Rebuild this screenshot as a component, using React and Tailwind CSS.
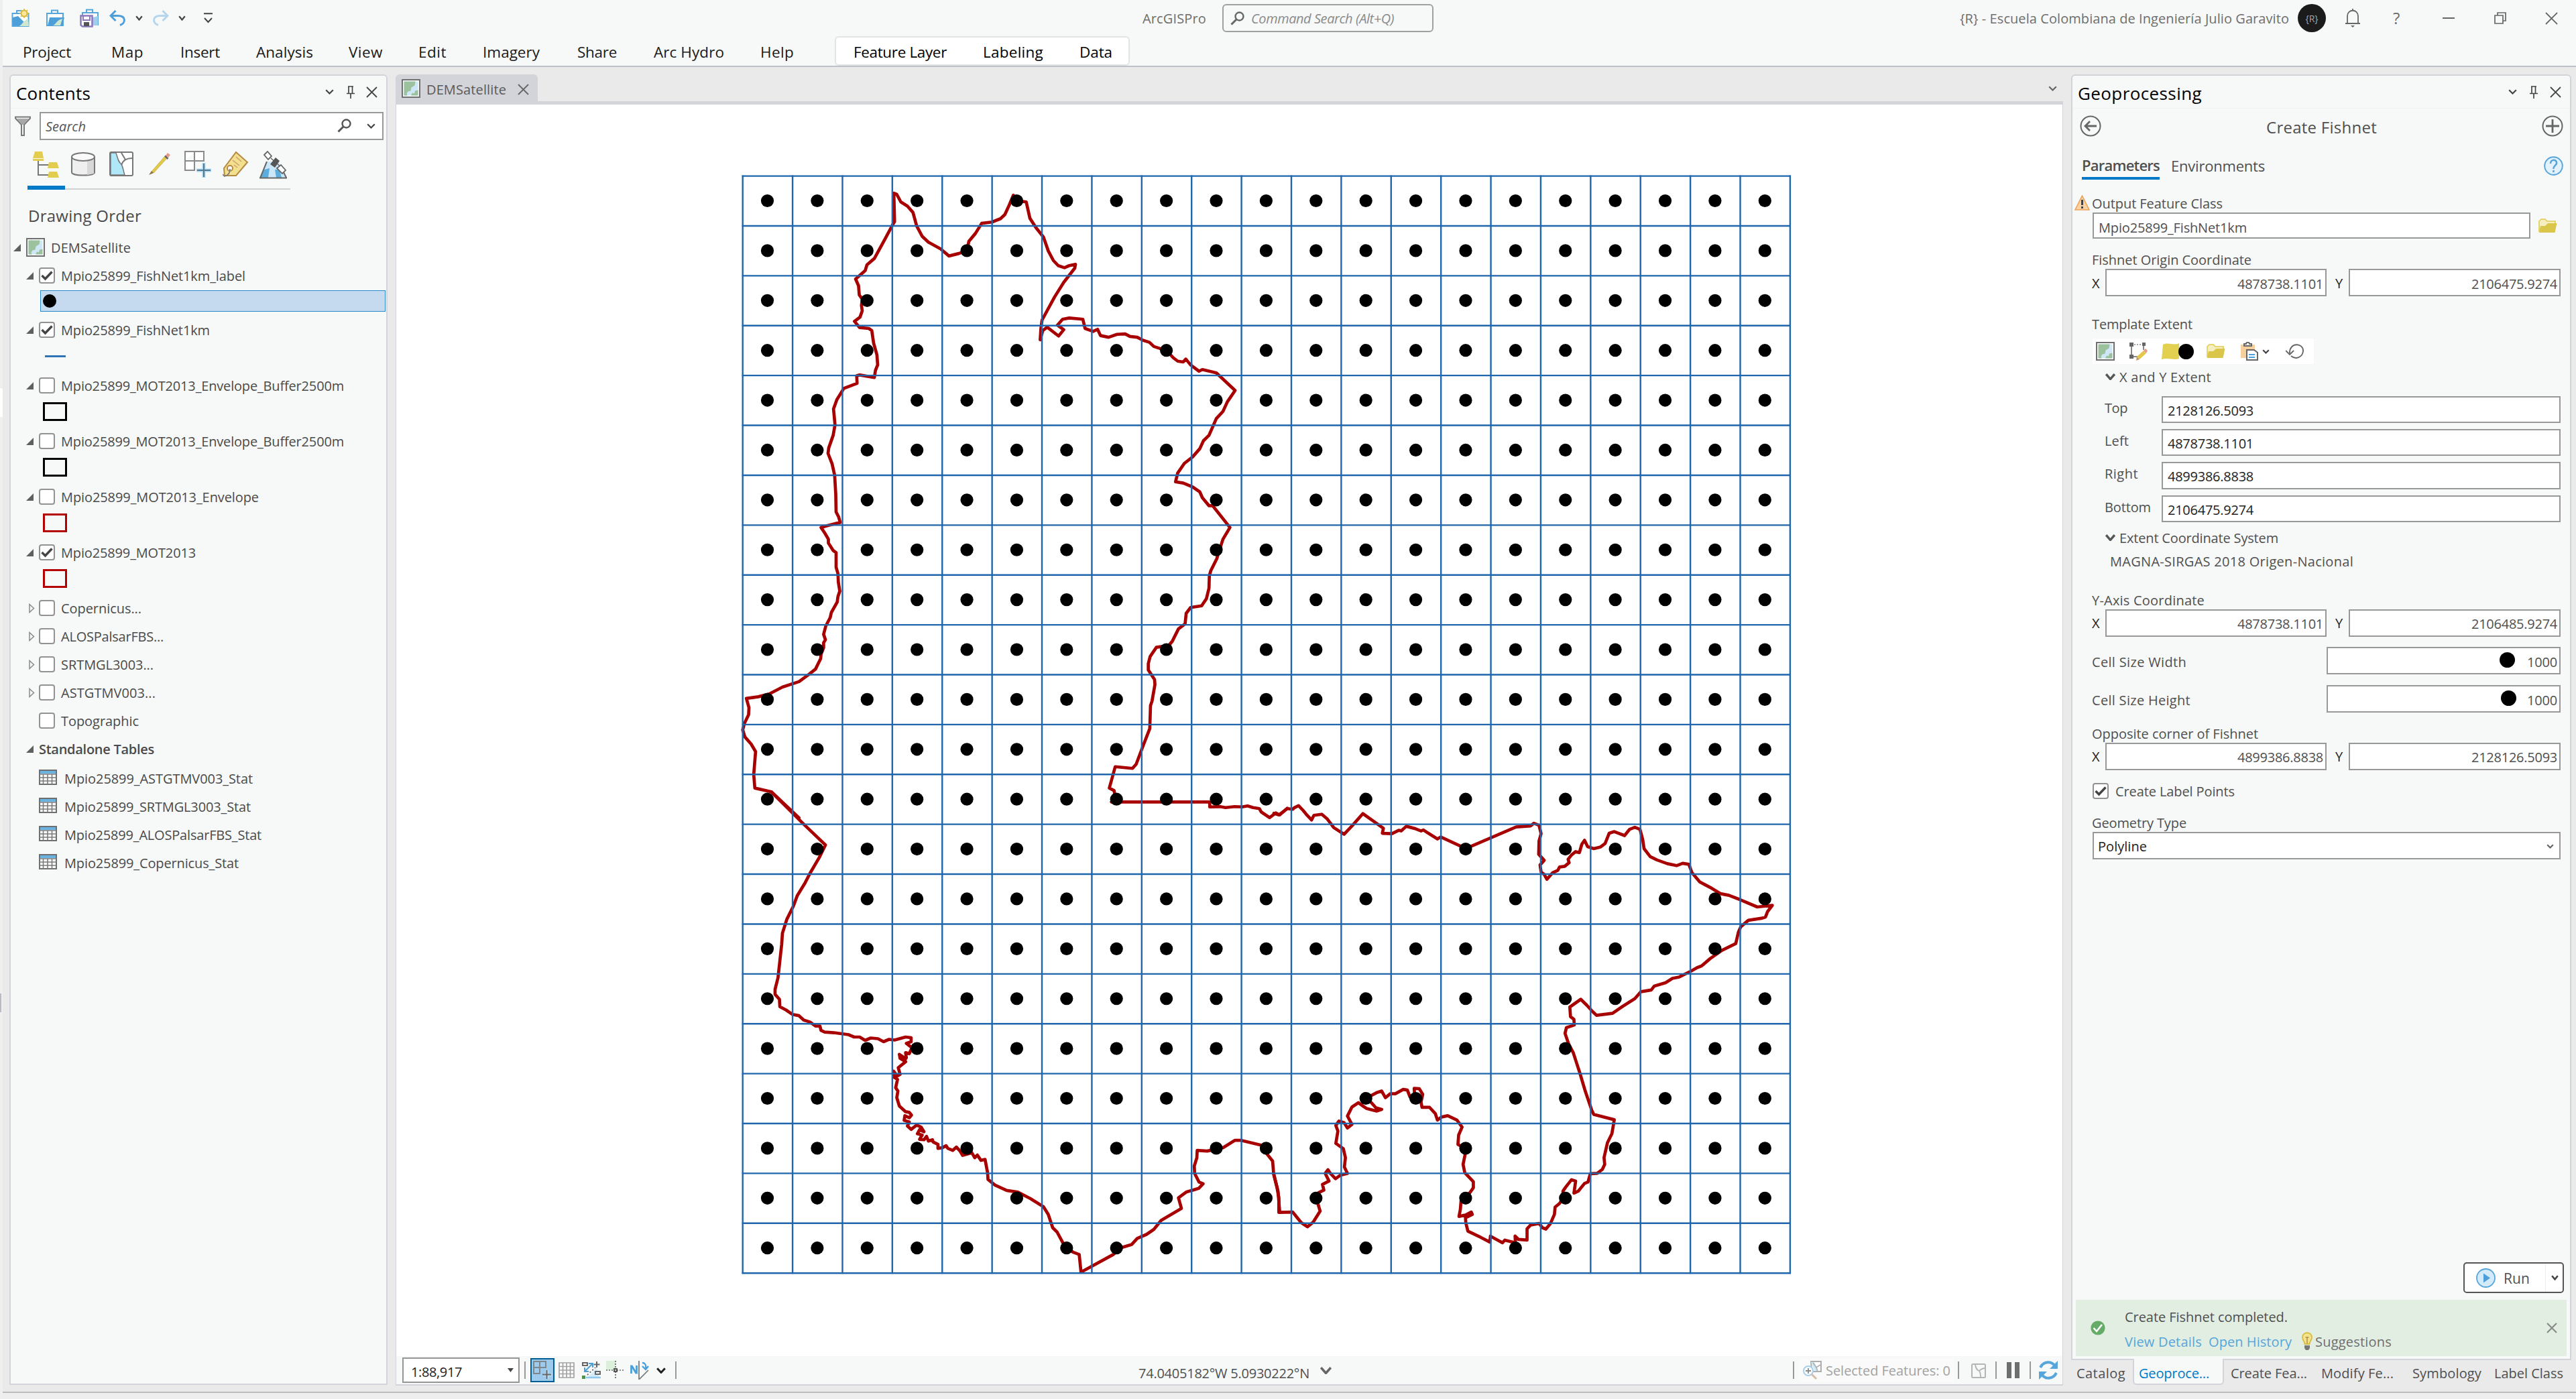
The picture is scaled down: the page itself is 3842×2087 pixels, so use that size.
import { useLayoutEffect, useRef } from "react";

/* Text set to a measured column width by adjusting its letter spacing. */
function T({ w, className = "", children }) {
  const ref = useRef(null);
  useLayoutEffect(() => {
    const el = ref.current;
    el.style.letterSpacing = "0px";
    const natural = el.getBoundingClientRect().width;
    el.style.letterSpacing = (w + 2 - natural) / String(children).length + "px";
  }, [w, children]);
  return (
    <span className={"block shrink-0 -translate-x-px translate-y-px whitespace-pre " + className} style={{ width: w }}>
      <span ref={ref} className="inline-block">{children}</span>
    </span>
  );
}

const Svg = ({ w, h, className = "", children }) => (
  <svg width={w} height={h} viewBox={`0 0 ${w} ${h}`} fill="none" className={"block shrink-0 " + className}>{children}</svg>
);

const Chevron = ({ w = 13, h = 8, color = "#444", sw = 2.2, className = "" }) => (
  <Svg w={w} h={h} className={className}>
    <path d={`M1.2 1.2 L${w / 2} ${h - 1.5} L${w - 1.2} 1.2`} stroke={color} strokeWidth={sw} />
  </Svg>
);
const Cross = ({ s = 18, color = "#444", sw = 1.8, className = "" }) => (
  <Svg w={s} h={s} className={className}>
    <path d={`M1 1 L${s - 1} ${s - 1} M${s - 1} 1 L1 ${s - 1}`} stroke={color} strokeWidth={sw} />
  </Svg>
);
const Pin = ({ className = "" }) => (
  <Svg w={12} h={19} className={className}>
    <path d="M2 1h8M3 1v10M8.500 1v10M0 11.500h12M6 12v7" stroke="#444" strokeWidth="1.700" />
  </Svg>
);
const Magnifier = ({ color = "#555", className = "" }) => (
  <Svg w={21} h={21} className={className}>
    <circle cx="13.5" cy="7.5" r="6" stroke={color} strokeWidth="2.4" />
    <path d="M9 12 L1.5 19.5" stroke={color} strokeWidth="3" />
  </Svg>
);
const MapIcon = ({ className = "" }) => (
  <Svg w={28} h={28} className={className}>
    <rect x="1" y="1" width="26" height="26" fill="#fff" stroke="#707070" strokeWidth="2" />
    <rect x="3.5" y="3.5" width="21" height="21" fill="#cfe6f6" />
    <path d="M3.500 3.500h17l-1 6-5 3-1 5-4 1-2 3 1 3h-5z" fill="#9bc29c" />
    <path d="M14 24.500l2-4 3 1 1-4 4.500-1v8z" fill="#9bc29c" />
  </Svg>
);
const Folder = ({ className = "" }) => (
  <Svg w={28} h={22} className={className}>
    <path d="M1 20V4l3-3h6l3 3h12v5" stroke="#e0cc50" strokeWidth="1.6" fill="#f5eec0" />
    <path d="M1 21l2-10h7l4-4h13.500l-3 14z" fill="#dac64a" />
  </Svg>
);
const Undo = ({ color, flip }) => (
  <Svg w={26} h={24}>
    <g transform={flip ? "matrix(-1 0 0 1 26 0)" : undefined}>
      <path d="M2 8.500h11c12 0 12 11 3 14" stroke={color} strokeWidth="3" />
      <path d="M9.500 1L2 8.500l7.500 7.500" stroke={color} strokeWidth="3" />
    </g>
  </Svg>
);

function TitleBar() {
  return (
    <div className="flex h-[54px] items-center pl-[13px] text-[20px] text-[#6e6e6e]">
      <Svg w={28} h={28}>
        <path d="M1.500 7h24v19h-24z" fill="#fff" stroke="#56a5db" strokeWidth="2" />
        <path d="M2 13l8-2 8 8 7 6H2z" fill="#4d9fd9" />
        <path d="M26 26H12c4-2 5-8 13-11z" fill="#cfe7cf" />
        <path d="M8 7V3h8" stroke="#56a5db" strokeWidth="2" />
        <circle cx="19" cy="7" r="4.500" fill="#fbe89a" stroke="#d8b93c" strokeWidth="2" />
        <path d="M19 0v2M19 12v2M12 7h2M24 7h2M14 2l1.500 1.500M22.500 10.500L24 12M24 2l-1.500 1.500M15.500 10.500L14 12" stroke="#d8b93c" strokeWidth="1.600" />
      </Svg>
      <Svg w={28} h={26} className="ml-[24px]">
        <path d="M1 6h24v18H1z" fill="#fff" stroke="#56a5db" strokeWidth="2" />
        <path d="M8 6V1.500h9V6" stroke="#56a5db" strokeWidth="2" />
        <path d="M2 25L5 12h22l-3 13z" fill="#4d9fd9" />
        <path d="M10 24c4-1 5-8 14-10l-3 10z" fill="#cfe7cf" />
      </Svg>
      <Svg w={29} h={28} className="ml-[22px]">
        <path d="M4 6h23v18H4z" fill="#fff" stroke="#56a5db" strokeWidth="2" />
        <path d="M10 6V1.500h9V6" stroke="#56a5db" strokeWidth="2" />
        <path d="M19 13l8-2v14h-8z" fill="#9fcdea" />
        <path d="M1.500 10.500h17v16H4l-2.500-2z" fill="#fff" stroke="#8d78bd" strokeWidth="2.600" />
        <path d="M5 11v6h10v-6" stroke="#8d78bd" strokeWidth="2" />
        <path d="M6 20h8v6H6z" fill="#555" />
      </Svg>
      <div className="ml-[15px]"><Undo color="#4d9fd9" /></div>
      <Chevron w={11} h={8} className="ml-[13px]" />
      <div className="ml-[13px]"><Undo color="#b5d5ec" flip /></div>
      <Chevron w={11} h={8} className="ml-[14px]" />
      <Svg w={13} h={16} className="ml-[27px]"><path d="M0 1.200h13M1 8l5.500 6L12 8" stroke="#444" strokeWidth="2" /></Svg>
      <T w={93} className="ml-[1388px]">ArcGISPro</T>
      <div className="ml-[25px] flex h-[42px] w-[315px] items-center rounded-[6px] border-2 border-[#a0a0a0] pl-[10px] text-[#8a8a8a]">
        <Magnifier color="#666" />
        <T w={211} className="ml-[11px] italic">Command Search (Alt+Q)</T>
      </div>
      <T w={489} className="ml-[786px]">{"{R} - Escuela Colombiana de Ingeniería Julio Garavito"}</T>
      <div className="ml-[14px] flex h-[42px] w-[42px] items-center justify-center rounded-full bg-[#1b1b1b] text-[14px] text-[#a5a5a5]">{"{R}"}</div>
      <Svg w={24} h={28} className="ml-[28px]">
        <path d="M1 22h22M4 21V11c0-11 16-11 16 0v10M12 3V0" stroke="#666" strokeWidth="1.800" />
        <path d="M9 25h6l-3 3z" fill="#666" />
      </Svg>
      <span className="ml-[48px] block w-[13px] text-[24px]">?</span>
      <div className="ml-[61px] h-[2px] w-[18px] bg-[#666]" />
      <Svg w={18} h={18} className="ml-[59px]">
        <path d="M1 5h12v12H1zM5 5V1h12v12h-4" stroke="#666" strokeWidth="1.700" />
      </Svg>
      <Cross s={19} color="#666" className="ml-[58px]" />
    </div>
  );
}

function Ribbon() {
  return (
    <div className="flex h-[44px] items-center pl-[31px] text-[22.5px] text-[#1a1a1a]">
      <T w={70} className="pt-[1px]">Project</T>
      <T w={46} className="ml-[62px] pt-[1px]">Map</T>
      <T w={57} className="ml-[57px] pt-[1px]">Insert</T>
      <T w={83} className="ml-[56px] pt-[1px]">Analysis</T>
      <T w={49} className="ml-[55px] pt-[1px]">View</T>
      <T w={40} className="ml-[55px] pt-[1px]">Edit</T>
      <T w={83} className="ml-[56px] pt-[1px]">Imagery</T>
      <T w={57} className="ml-[58px] pt-[1px]">Share</T>
      <T w={103} className="ml-[57px] pt-[1px]">Arc Hydro</T>
      <T w={48} className="ml-[56px] pt-[1px]">Help</T>
      <div className="ml-[62px] flex h-full w-[440px] items-center rounded-[6px] border-2 border-[#e2e3e5] bg-white pl-[27px] text-black">
        <T w={137} className="pt-[1px]">Feature Layer</T>
        <T w={88} className="ml-[56px] pt-[1px]">Labeling</T>
        <T w={47} className="ml-[56px] pt-[1px]">Data</T>
      </div>
    </div>
  );
}

const OpenArrow = () => <Svg w={11} h={11}><path d="M11 0v11H0z" fill="#5f5f5f" /></Svg>;
const ClosedArrow = () => <Svg w={11} h={15}><path d="M3 1.500l6.500 6L3 13.500z" stroke="#8a8a8a" strokeWidth="1.500" /></Svg>;

function Checkbox({ checked, className = "" }) {
  return (
    <div className={"flex h-[24px] w-[24px] shrink-0 items-center justify-center rounded-[4px] border-2 border-[#929292] bg-white " + className}>
      {checked && <Svg w={18} h={16}><path d="M1.500 8l5 5L16.500 2.500" stroke="#444" strokeWidth="3.400" /></Svg>}
    </div>
  );
}

function LayerRow({ name, w, checked, arrow, h = "h-[42px]" }) {
  return (
    <div className={"flex items-center pl-[23px] " + h}>
      <div className={arrow === "closed" ? "w-[11px] translate-x-[2px]" : "w-[11px]"}>{arrow === "open" ? <OpenArrow /> : arrow === "closed" ? <ClosedArrow /> : null}</div>
      <Checkbox checked={checked} className="ml-[8px]" />
      <T w={w} className="ml-[10px]">{name}</T>
    </div>
  );
}

const Swatch = ({ border }) => (
  <div className="flex h-[41px] pl-[48px]"><div className={"mt-[4px] h-[28px] w-[36px] border-[3px] " + border} /></div>
);

const TableIcon = () => (
  <Svg w={27} h={23}>
    <rect x="1" y="1" width="25" height="21" fill="#fff" stroke="#6f6f6f" strokeWidth="2" />
    <rect x="2" y="2" width="23" height="4" fill="#6ab2e0" />
    <path d="M1 7h25M1 12h25M1 17h25M6.500 7v15M13 7v15M19.500 7v15" stroke="#7b7b7b" strokeWidth="1.600" />
  </Svg>
);

const symbologyLayers = [
  ["Mpio25899_MOT2013_Envelope_Buffer2500m", 420, false, "border-black"],
  ["Mpio25899_MOT2013_Envelope_Buffer2500m", 420, false, "border-black"],
  ["Mpio25899_MOT2013_Envelope", 293, false, "border-[#b40000]"],
  ["Mpio25899_MOT2013", 199, true, "border-[#b40000]"],
];
const tables = [
  ["Mpio25899_ASTGTMV003_Stat", 279],
  ["Mpio25899_SRTMGL3003_Stat", 276],
  ["Mpio25899_ALOSPalsarFBS_Stat", 292],
  ["Mpio25899_Copernicus_Stat", 258],
];

function Contents() {
  return (
    <div className="ml-[10px] mt-[11px] h-[1955px] w-[564px] shrink-0 rounded-t-[6px] border-2 border-[#d3d4d9] bg-[#f7f9f8] text-[20px] text-[#4a4a4a]">
      <div className="flex h-[49px] items-center border-b border-[#f1f3f3] pl-[9px]">
        <T w={109} className="pt-[2px] text-[26px] text-black">Contents</T>
        <Chevron className="ml-[351px]" />
        <Pin className="ml-[19px]" />
        <Cross s={17} className="ml-[17px]" />
      </div>
      <div className="flex h-[51px] items-center pl-[6px]">
        <Svg w={24} h={30}>
          <path d="M1 1.500h22v2L14 13v16h-4V13L1 3.500z" fill="#f4f4f4" stroke="#7a7a7a" strokeWidth="2" />
          <path d="M3 4h18l-8 9h-2z" fill="#a8a8a8" />
        </Svg>
        <div className="ml-[13px] flex h-[42px] w-[513px] items-center border-2 border-[#999] bg-white pl-[8px]">
          <T w={58} className="pt-[1px] italic text-[#555]">Search</T>
          <Magnifier className="ml-[376px]" />
          <Chevron className="ml-[23px]" />
        </div>
      </div>
      <div className="ml-[25px] mt-[6px] flex h-[64px] w-[392px] items-start border-b-2 border-[#cfd1d0] pl-[8px] pt-[6px]">
        <Svg w={40} h={42}>
          <path d="M8 14v22h16M8 21h16" stroke="#777" strokeWidth="2" />
          <path d="M3 1h11l2 10H0zM0 12h16v3H0zM24 17h12l3 9H22zM24 31h12l3 9H22z" fill="#e3cd4e" />
        </Svg>
        <Svg w={37} h={36} className="ml-[17px] mt-[2px]">
          <path d="M1 7v23c0 6 34 6 34 0V7" fill="#efefef" stroke="#777" strokeWidth="2" />
          <path d="M24 10h10v22l-10 2z" fill="#d8d8d8" />
          <ellipse cx="18" cy="7" rx="17" ry="6" fill="#fafafa" stroke="#777" strokeWidth="2" />
        </Svg>
        <Svg w={36} h={37} className="ml-[20px] mt-[1px]">
          <rect x="1" y="1" width="34" height="35" rx="2" fill="#fff" stroke="#777" strokeWidth="2" />
          <path d="M2 2h8c3 9 3 13 8 17 3 5 3 11 5 16H2z" fill="#b0e8f8" stroke="#777" strokeWidth="1.500" />
          <path d="M34 10c-10 0-14 4-16 10M24 12L18 2" stroke="#777" strokeWidth="2" />
        </Svg>
        <Svg w={36} h={36} className="ml-[21px] mt-[2px]">
          <path d="M6 29L26 6l3 3L9 31z" fill="#e3c94a" stroke="#cdb545" strokeWidth="1" />
          <path d="M27 5l3-4 4 3-3 4z" fill="#e69c8d" />
          <path d="M26 5.500l4.500 4.500" stroke="#666" strokeWidth="2.500" />
          <path d="M6 28l-4 6 7-3z" fill="#8a7444" />
        </Svg>
        <Svg w={40} h={41} className="ml-[19px]">
          <path d="M1 1h28v14H1zM1 15v14h14V1" fill="#fff" stroke="#8a8a8a" strokeWidth="2" />
          <path d="M1 15h28M15 1v28" stroke="#8a8a8a" strokeWidth="2" />
          <path d="M29 18v22M18 29h22" stroke="#a9d6f3" strokeWidth="5" />
          <path d="M29 19v20M19 29h20" stroke="#56788f" strokeWidth="2" />
        </Svg>
        <Svg w={39} h={39} className="ml-[17px]">
          <path d="M20 2l17 15-17 20H3l-1-11z" fill="#f2e08e" stroke="#b58a43" strokeWidth="2" />
          <circle cx="11" cy="26" r="4" fill="#fff" stroke="#b58a43" strokeWidth="2" />
          <path d="M11 27c0 7-4 10-8 11l-3-3" stroke="#777" strokeWidth="1.600" />
          <path d="M20 9l8 7M15 14l10 8M17 21l5 4" stroke="#cf9f70" strokeWidth="1.600" />
        </Svg>
        <Svg w={43} h={42} className="ml-[15px]">
          <path d="M13 16h16l13 25H1z" fill="#cbe6f8" />
          <path d="M8 28l8-2-2 14H2zM24 28h7l3 12h-8z" fill="#5badde" />
          <path d="M12 16L2 40.500M1 40.500h41M41 40L35 28" stroke="#666" strokeWidth="2" />
          <path d="M18 11l16 14" stroke="#666" strokeWidth="1.500" />
          <path d="M8 6l5-5 6 7-5 5zM27 26l6-5 7 8-5 5z" fill="#fff" stroke="#666" strokeWidth="1.800" />
          <path d="M17 20l8-10 6 5-7 10z" fill="#555" />
        </Svg>
      </div>
      <div className="-mt-[6px] ml-[25px] h-[6px] w-[56px] bg-[#0079c8]" />
      <T w={167} className="ml-[27px] mt-[20px] text-[24px] leading-[36px]">Drawing Order</T>
      <div className="mt-[9px] flex h-[42px] items-center pl-[4px]">
        <OpenArrow />
        <MapIcon className="ml-[8px]" />
        <T w={117} className="ml-[10px]">DEMSatellite</T>
      </div>
      <LayerRow name="Mpio25899_FishNet1km_label" w={273} checked arrow="open" />
      <div className="ml-[44px] mt-[1px] flex h-[32px] w-[515px] items-center border-[1.500px] border-[#2a8bca] bg-[#c5daee] pl-[3px]">
        <div className="h-[20px] w-[20px] rounded-full bg-black" />
      </div>
      <LayerRow name="Mpio25899_FishNet1km" w={220} checked arrow="open" h="mt-[6px] h-[42px]" />
      <div className="flex h-[41px] pl-[51px]"><div className="mt-[17px] h-[3px] w-[31px] bg-[#2f74b5]" /></div>
      {symbologyLayers.map(([name, w, checked, border], i) => (
        <div key={i}>
          <LayerRow name={name} w={w} checked={checked} arrow="open" />
          <Swatch border={border} />
        </div>
      ))}
      <LayerRow name="Copernicus..." w={118} arrow="closed" />
      <LayerRow name="ALOSPalsarFBS..." w={151} arrow="closed" />
      <LayerRow name="SRTMGL3003..." w={136} arrow="closed" />
      <LayerRow name="ASTGTMV003..." w={139} arrow="closed" />
      <LayerRow name="Topographic" w={114} />
      <div className="flex h-[42px] items-center pl-[23px]">
        <OpenArrow />
        <T w={170} className="ml-[9px] font-semibold">Standalone Tables</T>
      </div>
      {tables.map(([name, w]) => (
        <div key={name} className="flex h-[42px] items-center pl-[42px]">
          <TableIcon />
          <T w={w} className="ml-[12px] pt-[4px]">{name}</T>
        </div>
      ))}
    </div>
  );
}

const boundary = [
  {
    t: "translate(1060 240) scale(0.54845 0.625)",
    p: "M240,1568 L165,1506 120,1497 117,1465 122,1410 110,1392 93,1375 87,1358 92,1342 103,1322 104,1305 97,1283 130,1279 160,1272 195,1256 240,1243 268,1225 285,1213 299,1188 300,1178 307,1162 307,1150 312,1143 307,1130 313,1110 325,1090 328,1078 344,1053 346,1040 351,1027 347,1005 346,985 341,970 341,935 333,930 320,912 320,903 310,888 300,875 320,870 352,863 348,850 341,838 340,795 337,750 330,723 319,698 321,685 333,655 338,630 334,592 343,570 362,543 398,531 397,513 405,511 445,517 448,500 454,487 452,463 443,435 438,405 430,400 405,398 391,383 406,373 412,358 410,345 412,330 404,320 402,298 394,282 420,262 425,248 445,233 470,193 495,152 500,145 498,77 506,80 517,98 535,108 550,123 560,155 575,180 592,194 625,210 648,227 675,221 697,214 702,192 720,173 737,149 765,146 788,138 800,128 812,105 823,82 832,95 858,98 868,137 885,160 905,182 918,215 932,238 945,250 962,255 975,250 992,247 990,256 960,290 935,325 901,380 898,400 896,427 903,405 915,397 946,418 960,403 943,392 957,378 975,375 1012,378 1018,400 1040,407 1052,402 1060,417 1082,421 1105,414 1127,413 1140,419 1160,421 1175,428 1193,433 1205,443 1240,453 1258,470 1270,478 1285,480 1292,473 1305,487 1328,502 1337,498 1375,506 1426,548 1405,575 1393,598 1375,615 1355,655 1340,668 1330,687 1310,707 1288,722 1270,745 1264,766 1285,769 1310,778 1330,790 1337,804 1355,823 1365,823 1412,875 1393,903 1385,925 1376,950 1360,978 1356,990 1355,1020 1348,1045 1335,1062 1305,1066 1293,1080 1290,1105 1272,1117 1255,1147 1245,1157 1212,1161 1195,1183 1190,1200 1190,1215 1207,1238 1208,1250 1200,1290 1196,1300 1194,1355 1175,1398 1157,1440 1147,1450 1100,1446 1090,1478 1084,1497 1097,1503 1100,1520 1090,1530 1110,1530",
  },
  {
    t: "translate(1060 1160) scale(0.54845 0.49744)",
    p: "M1090,73 L1357,73 1357,88 1385,87 1400,90 1425,87 1445,88 1460,85 1475,90 1492,93 1497,103 1520,120 1537,106 1547,112 1568,92",
  },
  {
    t: "translate(1900 1160) scale(0.5102 0.49744)",
    p: "M0,107 L15,112 39,93 55,95 60,90 72,84 85,98 97,113 110,127 117,113 140,110 155,123 175,150 205,170 230,143 260,108 290,130 320,152 317,167 345,168 365,158 372,160 387,146 413,153 430,160 437,157 450,166 478,184 488,178 561,213 635,180 708,148 750,145 760,137 775,143 781,168 775,190 774,230 790,248 778,262 781,283 790,290 798,305 815,285 830,278 835,268 850,266 863,255 860,245 870,232 882,222 893,225 900,200 908,188 917,207 935,213 955,208 968,198 980,167 995,162 1025,174 1040,155 1055,149 1070,155 1078,185 1082,213 1100,237 1120,247 1150,258 1177,264 1195,257 1213,260 1222,285 1245,313 1280,332 1305,348 1330,353 1365,367 1413,388 1457,383 1443,402 1437,418 1425,422 1387,428 1365,447 1358,463 1350,498 1310,518 1275,543 1250,565 1237,570 1220,580 1185,598 1165,602 1145,615 1112,625 1103,637 1073,642 1055,663 1018,687 990,707 943,713 930,700 915,683 897,665 865,688 867,717 877,725 878,742 855,750 851,767 862,800 875,825 895,888 910,940 930,1000 935,1010 995,1026 988,1068 975,1095 965,1140 967,1160 960,1175 945,1187 925,1188 918,1213 908,1217 890,1240 877,1246 880,1225 882,1210 870,1206 853,1228 845,1240 845,1262 835,1277 822,1288 820,1310 808,1338 795,1354 785,1350 775,1337 750,1342 740,1353 740,1387 715,1385 705,1375 706,1395 675,1387 668,1395 645,1382 633,1375 631,1393 605,1379 567,1360 561,1335 560,1320 580,1310 577,1303 560,1312 541,1316 545,1295 547,1270 561,1262 583,1230 583,1212 558,1185 553,1160 560,1125 561,1113 538,1100 540,1072 550,1048 535,1027 508,1014 490,1018 478,1027 472,1008 455,989 433,989 430,973 435,950 425,933 410,932 412,960 398,958 390,937 378,935 355,948 340,948 326,960 315,940 300,945 269,962 285,975 298,990 315,995 300,1000 270,992 247,975 228,988 215,1015 228,1040 215,1051 205,1035 190,1030 181,1043 187,1060 181,1097 203,1113 209,1140 206,1168 215,1187 195,1192 180,1203 165,1187 158,1176 150,1187 161,1210 142,1220 146,1237 130,1245 124,1262 135,1300 115,1333 98,1347 80,1335 55,1303 17,1304 12,1240 0,1190",
  },
  {
    t: "translate(1060 1160) scale(0.54845 0.49744)",
    p: "M1545,1304 L1545,1260 1540,1230 1531,1190 1528,1150 1510,1125 1500,1103 1443,1088 1425,1088 1393,1110 1350,1120 1323,1118 1322,1140 1315,1165 1316,1187 1328,1213 1339,1218 1327,1232 1293,1243 1272,1260 1280,1292 1225,1328 1205,1355 1185,1370 1160,1382 1145,1400 1115,1410 1095,1430 1007,1483 1002,1430 985,1423 960,1400 942,1363 930,1350 918,1310 905,1287 870,1263 835,1243 805,1238 773,1222 754,1205 753,1185 746,1145 735,1148 725,1132 718,1140 710,1125 685,1133 678,1120 668,1108 658,1118 645,1112 640,1104 630,1110 618,1112 618,1100 605,1093 603,1086 592,1090 587,1076 580,1086 568,1085 575,1072 562,1068 568,1056 580,1062 572,1048 560,1042 545,1055 535,1045 540,1033 526,1028 528,1014 540,1020 546,1012 540,1004 530,1002 513,985 506,960 509,940 503,930 508,905 498,898 497,880 507,895 515,890 510,870 530,852 515,842 513,830 524,838 526,850 532,840 530,825 540,828 547,810 532,797 545,792 545,780 530,778 500,787 485,785 470,792 455,783 435,781 420,788 405,778 390,778 375,771 335,765 310,763 300,758 297,745 285,745 270,733 253,727 240,714 222,710 205,697 188,687 187,665 175,650 175,635 183,600 188,550 193,500 195,467 207,425 225,385 235,355 257,315 270,287 295,240 312,202 255,142 165,43",
  },
];

const CELL = 74.39;
const X0 = 1107.7;
const Y0 = 262.6;
const COLS = Array.from({ length: 22 }, (_, i) => X0 + i * CELL);
const ROWS = Array.from({ length: 23 }, (_, i) => Y0 + i * CELL);

function FishnetMap() {
  return (
    <svg viewBox="591 156 2485 1867" width={2485} height={1867} className="block" fill="none">
      <g stroke="#a80000" strokeWidth="4.7" strokeLinejoin="round" strokeLinecap="round">
        {boundary.map((b, i) => <path key={i} d={b.p} transform={b.t} vectorEffect="non-scaling-stroke" />)}
      </g>
      <g stroke="#1f66ac" strokeWidth="2.4">
        {COLS.map((x) => <path key={x} d={`M${x} ${Y0 - 1}V${ROWS[22] + 1}`} />)}
        {ROWS.map((y) => <path key={y} d={`M${X0 - 1} ${y}H${COLS[21] + 1}`} />)}
      </g>
      <g fill="#000">
        {COLS.slice(0, 21).map((x) => ROWS.slice(0, 22).map((y) => (
          <circle key={x + "-" + y} cx={x + CELL / 2 - 0.4} cy={y + CELL / 2 - 0.3} r="9.6" />
        )))}
      </g>
    </svg>
  );
}

const Divider = ({ className = "" }) => <div className={"h-[26px] w-[2px] shrink-0 bg-[#999] " + className} />;

function MapView() {
  return (
    <div className="ml-[12px] mt-[11px] flex w-[2487px] shrink-0 flex-col text-[20px] text-[#5a5a5a]">
      <div className="flex h-[40px]">
        <div className="flex h-[45px] w-[212px] items-start rounded-t-[6px] bg-[#d3d4d9] pl-[9px] pt-[7px]">
          <MapIcon />
          <T w={117} className="ml-[10px] leading-[30px]">DEMSatellite</T>
          <Cross s={17} color="#666" className="ml-[18px] mt-[7px]" />
        </div>
        <Chevron color="#666" className="ml-[2253px] mt-[17px]" />
      </div>
      <div className="h-[5px] bg-[#d3d4d9]" />
      <div className="h-[1867px] border-x border-[#d3d4d9] bg-white"><FishnetMap /></div>
      <div className="flex h-[44px] items-center border-b-2 border-l border-r border-[#d3d4d9] bg-[#f7f9f8] pl-[9px]">
        <div className="flex h-[38px] w-[175px] items-center border-2 border-[#959595] bg-white pl-[12px] text-[#222]">
          <T w={74} className="pt-[3px]">1:88,917</T>
          <Svg w={9} h={6} className="ml-[69px]"><path d="M0 0h9L4.500 6z" fill="#444" /></Svg>
        </div>
        <Divider className="ml-[7px]" />
        <div className="ml-[7px] flex h-[36px] w-[36px] items-center justify-center border-2 border-[#005e95] bg-[#9ccbee]">
          <Svg w={28} h={28}>
            <path d="M1 1h18v9H1zM1 10v9h9V1" stroke="#7f868c" strokeWidth="2" />
            <path d="M21 14v13M15 21h13" stroke="#b8dcf4" strokeWidth="5" />
            <path d="M20.500 14v13M14 20.500h13" stroke="#666" strokeWidth="2" />
          </Svg>
        </div>
        <Svg w={24} h={24} className="ml-[6px]">
          <path d="M1 1h22v22H1zM6.500 1v22M12 1v22M17.500 1v22M1 6.500h22M1 12h22M1 17.500h22" fill="#fff" stroke="#a2a2a2" strokeWidth="1.700" />
        </Svg>
        <Svg w={28} h={28} className="ml-[11px]">
          <path d="M8 25L22 11l4 14z" fill="#d3eaf9" />
          <path d="M6 25h22" stroke="#8fc8ec" strokeWidth="2.500" />
          <path d="M5 15L15 5M10 4h6v6M4 10v6h6" stroke="#4d9fd9" strokeWidth="2" />
          <path d="M8 21l12-11" stroke="#666" strokeWidth="2" strokeDasharray="2 3" />
          <path d="M1 3h7v4H1zM20 16h7v4h-7z" stroke="#666" strokeWidth="2" fill="#fff" />
          <path d="M22 1v9M17.500 5.500h9" stroke="#666" strokeWidth="2" />
          <path d="M0 22h5v5H0z" fill="#4e9152" />
        </Svg>
        <Svg w={28} h={28} className="ml-[8px]">
          <path d="M0 0h14v14H0z" fill="#dcefda" />
          <path d="M14 0v28M0 14h28" stroke="#666" strokeWidth="1.700" strokeDasharray="2 2" />
          <path d="M12 12h4v4h-4z" stroke="#555" strokeWidth="2" fill="#ccc" />
        </Svg>
        <Svg w={28} h={28} className="ml-[8px]">
          <path d="M1.500 19V8h1l6 10h1V7" stroke="#4d9fd9" strokeWidth="2.800" />
          <path d="M13 0v28L27 14" stroke="#777" strokeWidth="1.700" />
          <path d="M18 3c4 0 6 3 5 9M18 8l5 5 4-5" stroke="#4d9fd9" strokeWidth="2.300" />
        </Svg>
        <Chevron w={14} h={9} color="#222" sw={3} className="ml-[11px]" />
        <Divider className="ml-[14px]" />
        <T w={253} className="ml-[690px] pt-[8px] text-[#4f4f4f]">74.0405182°W 5.0930222°N</T>
        <Chevron w={17} h={11} color="#666" sw={3.5} className="ml-[17px]" />
        <Divider className="ml-[688px]" />
        <div className="ml-[7px] flex h-[36px] w-[231px] items-center bg-[#fafafa] pl-[6px] text-[#a2a2a2]">
          <Svg w={29} h={29}>
            <path d="M12 1h15v15H13z" stroke="#aeaeae" strokeWidth="2" fill="#fff" />
            <path d="M12 2h5l6 14-6-2z" fill="#cdeaf6" />
            <path d="M15 3l5 7 6-4M20 10l2 6" stroke="#aeaeae" strokeWidth="1.600" />
            <circle cx="8" cy="15" r="7" fill="#fff" stroke="#a6cfec" strokeWidth="2" />
            <path d="M8 11v8M4 15h8" stroke="#888" strokeWidth="1.800" />
            <path d="M13 20l7 7" stroke="#d6bda3" strokeWidth="3" />
          </Svg>
          <T w={184} className="ml-[6px]">Selected Features: 0</T>
        </div>
        <Divider className="ml-[6px]" />
        <Svg w={22} h={22} className="ml-[18px] mt-[2px]">
          <rect x="1" y="1" width="20" height="20" rx="1.500" stroke="#b4b4b4" strokeWidth="2" />
          <path d="M6 2c1 5 2 8 6 9 2 3 2 6 2 10M21 7c-4 0-7 2-9 4" stroke="#b4b4b4" strokeWidth="1.800" />
        </Svg>
        <Divider className="ml-[14px]" />
        <div className="ml-[15px] h-[24px] w-[7px] bg-[#6e6e6e]" />
        <div className="ml-[5px] h-[24px] w-[7px] bg-[#6e6e6e]" />
        <Divider className="ml-[15px]" />
        <Svg w={28} h={28} className="ml-[12px]">
          <path d="M2 10C7 0 19 0 24 8M26 18C21 28 9 28 4 20" stroke="#56a5db" strokeWidth="4" />
          <path d="M28 0v12H16zM0 28V16h12z" fill="#56a5db" />
        </Svg>
      </div>
    </div>
  );
}

const Label = ({ w, className, children }) => <div className={"flex items-center pl-[30px] " + className}><T w={w}>{children}</T></div>;
const ValueBox = ({ width, children }) => (
  <div className={"flex h-[41px] items-center justify-end border-2 border-[#989898] bg-white pr-[4px] pt-[2px] " + width}>{children}</div>
);

function XYRow({ x, y }) {
  return (
    <div className="flex items-center pl-[30px]">
      <T w={12} className="text-[#222]">X</T>
      <div className="ml-[7px]"><ValueBox width="w-[330px]"><T w={126}>{x}</T></ValueBox></div>
      <T w={12} className="ml-[14px] text-[#222]">Y</T>
      <div className="ml-[7px]"><ValueBox width="w-[316px]"><T w={126}>{y}</T></ValueBox></div>
    </div>
  );
}

function ExtentField({ name, w, value }) {
  return (
    <div className="mb-[9px] flex h-[40.2px] pl-[49px]">
      <T w={w} className="leading-[34px]">{name}</T>
      <div className="ml-auto mr-[14px] flex w-[595px] items-center border-2 border-[#989898] bg-white pl-[8px] pt-[2px] text-[#222]"><T w={126}>{value}</T></div>
    </div>
  );
}

const CellSize = ({ name, w, dot }) => (
  <div className="flex items-center pl-[30px]">
    <T w={w} className="pt-[3px]">{name}</T>
    <div className="ml-auto mr-[14px]">
      <ValueBox width="w-[349px]">
        <div className={"-mt-[3px] h-[23px] w-[23px] rounded-full bg-black " + dot} />
        <T w={43} className="pt-[1px]">1000</T>
      </ValueBox>
    </div>
  </div>
);

function Geoprocessing() {
  return (
    <div className="ml-[12px] mt-[11px] w-[746px] shrink-0 text-[20px] text-[#4f4f4f]">
      <div className="flex h-[1918px] flex-col rounded-t-[6px] border-2 border-[#d3d4d9] bg-[#f7f9f8]">
        <div className="flex h-[49px] shrink-0 items-center border-b border-[#f1f3f3] pl-[9px]">
          <T w={183} className="pt-[2px] text-[26px] text-black">Geoprocessing</T>
          <Chevron className="ml-[458px]" />
          <Pin className="ml-[19px]" />
          <Cross s={17} className="ml-[18px]" />
        </div>
        <div className="flex h-[51px] shrink-0 items-center pl-[11px]">
          <Svg w={32} h={32}>
            <circle cx="16" cy="16" r="14.500" stroke="#666" strokeWidth="2" />
            <path d="M25 16H9M15 9l-7 7 7 7" stroke="#666" strokeWidth="2.800" />
          </Svg>
          <T w={163} className="ml-[247px] pt-[2px] text-[24px]">Create Fishnet</T>
          <Svg w={32} h={32} className="ml-[247px]">
            <circle cx="16" cy="16" r="14.500" stroke="#666" strokeWidth="2" />
            <path d="M16 6v20M6 16h20" stroke="#666" strokeWidth="2.800" />
          </Svg>
        </div>
        <div className="flex h-[68px] shrink-0 items-center pl-[14px] text-[22px]">
          <div className="flex h-[42px] w-[116px] items-center border-b-4 border-[#0079c8] pl-[1px] pt-[1px]"><T w={114} className="font-semibold">Parameters</T></div>
          <T w={138} className="-mt-[2px] ml-[18px]">Environments</T>
          <Svg w={29} h={29} className="ml-[417px]">
            <circle cx="14.500" cy="14.500" r="13.300" fill="#e3f2fc" stroke="#56a5db" strokeWidth="2" />
            <path d="M10 11c0-7 10-7 9 0-1 3-4.500 3-4.500 8M14.500 21v3" stroke="#56a5db" strokeWidth="2.600" />
          </Svg>
        </div>
        <div className="mt-[7px] flex h-[29px] items-center pl-[3px]">
          <Svg w={23} h={23}>
            <path d="M11.500 1L22 22H1z" fill="#fbd3a2" stroke="#eba35c" strokeWidth="1.600" />
            <path d="M11.500 7v8M11.500 17v3" stroke="#444" strokeWidth="3" />
          </Svg>
          <T w={193} className="ml-[4px]">Output Feature Class</T>
        </div>
        <div className="flex items-center pl-[30px]">
          <div className="flex h-[39px] w-[653px] items-center border-2 border-[#989898] bg-white pl-[8px] pt-[4px]"><T w={219}>Mpio25899_FishNet1km</T></div>
          <Folder className="ml-[12px]" />
        </div>
        <Label w={236} className="mt-[17px] h-[28px]">Fishnet Origin Coordinate</Label>
        <XYRow x="4878738.1101" y="2106475.9274" />
        <Label w={148} className="mt-[26px] h-[29px]">Template Extent</Label>
        <div className="ml-[30px] mt-[8px] flex h-[38px] w-[330px] items-center bg-white pl-[5px]">
          <MapIcon />
          <Svg w={28} h={28} className="ml-[21px]">
            <path d="M4 4h18" stroke="#888" strokeWidth="1.600" strokeDasharray="2 2" />
            <path d="M4 4v18h14M22 6v6" stroke="#888" strokeWidth="2" />
            <path d="M1 1h6v6H1zM20 1h5v5h-5zM1 19h6v6H1z" fill="#666" />
            <path d="M12 22l10-9 4 4-10 9z" fill="#e3c94a" />
            <path d="M22 13l3-3 3 3-2 4z" fill="#e69c8d" />
            <path d="M12 22l-1 6 5-2z" fill="#c29a64" />
          </Svg>
          <Svg w={28} h={26} className="ml-[20px]"><path d="M3 3c8-4 16 2 24-2v23c-8 3-16-2-26 1z" fill="#e3cf50" /></Svg>
          <div className="-ml-[2px] h-[23px] w-[23px] rounded-full bg-black" />
          <Folder className="ml-[19px]" />
          <Svg w={28} h={28} className="ml-[22px]">
            <path d="M1 4h21v20H1z" fill="#f6cf9c" />
            <path d="M6 6V3h3c0-3 5-3 5 0h3v3z" fill="#fff" stroke="#666" strokeWidth="2" />
            <path d="M10 12h11l5 4v11H10z" fill="#fff" stroke="#666" strokeWidth="2" />
            <path d="M13 19h9M13 23h9" stroke="#4d9fd9" strokeWidth="1.800" />
          </Svg>
          <Chevron w={11} h={7} className="ml-[5px]" />
          <Svg w={28} h={24} className="ml-[24px]">
            <path d="M6 15C5-2 27-1 26 12c-1 9-11 13-18 7" stroke="#666" strokeWidth="1.900" />
            <path d="M0 11l6 6 6-6" stroke="#666" strokeWidth="1.900" />
          </Svg>
        </div>
        <div className="flex h-[38px] items-center pl-[49px]">
          <Chevron w={15} h={10} color="#555" sw={3.4} /><T w={135} className="ml-[7px]">X and Y Extent</T>
        </div>
        <div className="mt-[10px]">
          <ExtentField name="Top" w={32} value="2128126.5093" />
          <ExtentField name="Left" w={34} value="4878738.1101" />
          <ExtentField name="Right" w={48} value="4899386.8838" />
          <ExtentField name="Bottom" w={67} value="2106475.9274" />
        </div>
        <div className="-mt-[5px] flex h-[38px] items-center pl-[49px]">
          <Chevron w={15} h={10} color="#555" sw={3.4} /><T w={235} className="ml-[7px]">Extent Coordinate System</T>
        </div>
        <div className="flex h-[32px] items-center pl-[57px]"><T w={361}>MAGNA-SIRGAS 2018 Origen-Nacional</T></div>
        <Label w={166} className="mt-[29px] h-[27px]">Y-Axis Coordinate</Label>
        <XYRow x="4878738.1101" y="2106485.9274" />
        <div className="mt-[15px]"><CellSize name="Cell Size Width" w={139} dot="mr-[19px]" /></div>
        <div className="mt-[16px]"><CellSize name="Cell Size Height" w={145} dot="mr-[17px]" /></div>
        <Label w={246} className="mt-[18px] h-[27px]">Opposite corner of Fishnet</Label>
        <XYRow x="4899386.8838" y="2128126.5093" />
        <div className="mt-[19px] flex h-[24px] items-center pl-[30px]">
          <Checkbox checked /><T w={176} className="ml-[11px] pt-[1px]">Create Label Points</T>
        </div>
        <Label w={139} className="mt-[21px] h-[28px]">Geometry Type</Label>
        <div className="ml-[30px] flex h-[41px] w-[698px] items-center border-2 border-[#989898] bg-white pl-[7px] pt-[2px] text-[#222]">
          <T w={71}>Polyline</T>
          <Chevron w={11} h={7} color="#666" className="ml-auto mr-[8px]" />
        </div>
        <div className="ml-auto mr-[9px] mt-auto flex h-[46px] w-[150px] items-center rounded-[5px] border-2 border-[#555] bg-white pl-[17px]">
          <Svg w={29} h={29}>
            <circle cx="14.500" cy="14.500" r="13.500" fill="#d3eaf9" stroke="#56a5db" strokeWidth="1.800" />
            <path d="M11 7.500l10 7-10 7z" fill="#4d9fd9" />
          </Svg>
          <T w={37} className="ml-[13px] pt-[2px] text-[21px]">Run</T>
          <div className="ml-[24px] h-full w-px bg-[#ededed]" />
          <Chevron w={11} h={8} color="#444" sw={2.6} className="ml-[8px]" />
        </div>
        <div className="mb-[4px] ml-[5px] mr-[5px] mt-[10px] flex h-[84px] shrink-0 items-center bg-[#e3eee2] pl-[22px]">
          <Svg w={22} h={22}>
            <circle cx="11" cy="11" r="10.600" fill="#63ab66" />
            <path d="M4.500 11l4.500 5L17 6" stroke="#fff" strokeWidth="2.600" />
          </Svg>
          <div className="ml-[30px] mt-[3px] w-[620px]">
            <T w={241} className="leading-[36px]">Create Fishnet completed.</T>
            <div className="flex h-[38px] items-center text-[#56a5db]">
              <T w={113}>View Details</T>
              <T w={122} className="ml-[12px]">Open History</T>
              <Svg w={16} h={27} className="ml-[16px]">
                <path d="M4.500 18c0-4-3.500-5-3.500-10C1-1 15-1 15 8c0 5-3.500 6-3.500 10z" fill="#f3e48c" stroke="#d9bc3e" strokeWidth="1.800" />
                <path d="M5.500 8h5M8 8v9" stroke="#b48a45" strokeWidth="1.500" />
                <path d="M4 20h8v4l-2 3H6l-2-3z" fill="#777" />
              </Svg>
              <T w={112} className="ml-[5px] text-[#6e6e6e]">Suggestions</T>
            </div>
          </div>
          <Cross s={16} color="#8a8a8a" sw={2.2} className="ml-[8px]" />
        </div>
      </div>
      <div className="flex h-[37px] pl-[9px] leading-[37px]">
        <T w={71}>Catalog</T>
        <div className="-mt-[2px] ml-[12px] h-[39px] w-[136px] rounded-b-[6px] border-x-2 border-b-2 border-[#d3d4d9] bg-[#f7f9f8] pl-[8px] pt-[2px] text-[#0079c8]"><T w={103}>Geoproce...</T></div>
        <T w={112} className="ml-[11px]">Create Fea...</T>
        <T w={106} className="ml-[23px]">Modify Fe...</T>
        <T w={101} className="ml-[30px]">Symbology</T>
        <T w={101} className="ml-[21px]">Label Class</T>
      </div>
    </div>
  );
}

export default function App() {
  return (
    <div className="flex h-[2087px] w-[3842px] overflow-hidden bg-[#eaeaea] font-['Open_Sans','Noto_Sans',sans-serif] leading-normal">
      <div className="flex w-[4px] shrink-0 flex-col bg-[#eeefef]">
        <div className="mt-[579px] h-[43px] rounded-tr-[3px] bg-white" />
        <div className="mt-[860px] h-[28px] w-[2px] bg-[#b9bbc0]" />
      </div>
      <div className="flex w-[3838px] shrink-0 flex-col">
        <div className="h-[100px] shrink-0 border-b-2 border-[#bfc1c8] bg-[#f7f9f8]">
          <TitleBar />
          <Ribbon />
        </div>
        <div className="flex h-[1976px] shrink-0">
          <Contents />
          <MapView />
          <Geoprocessing />
        </div>
        <div className="h-[11px] border-t-2 border-[#bdbdbd] bg-[#eeeeee]" />
      </div>
    </div>
  );
}
